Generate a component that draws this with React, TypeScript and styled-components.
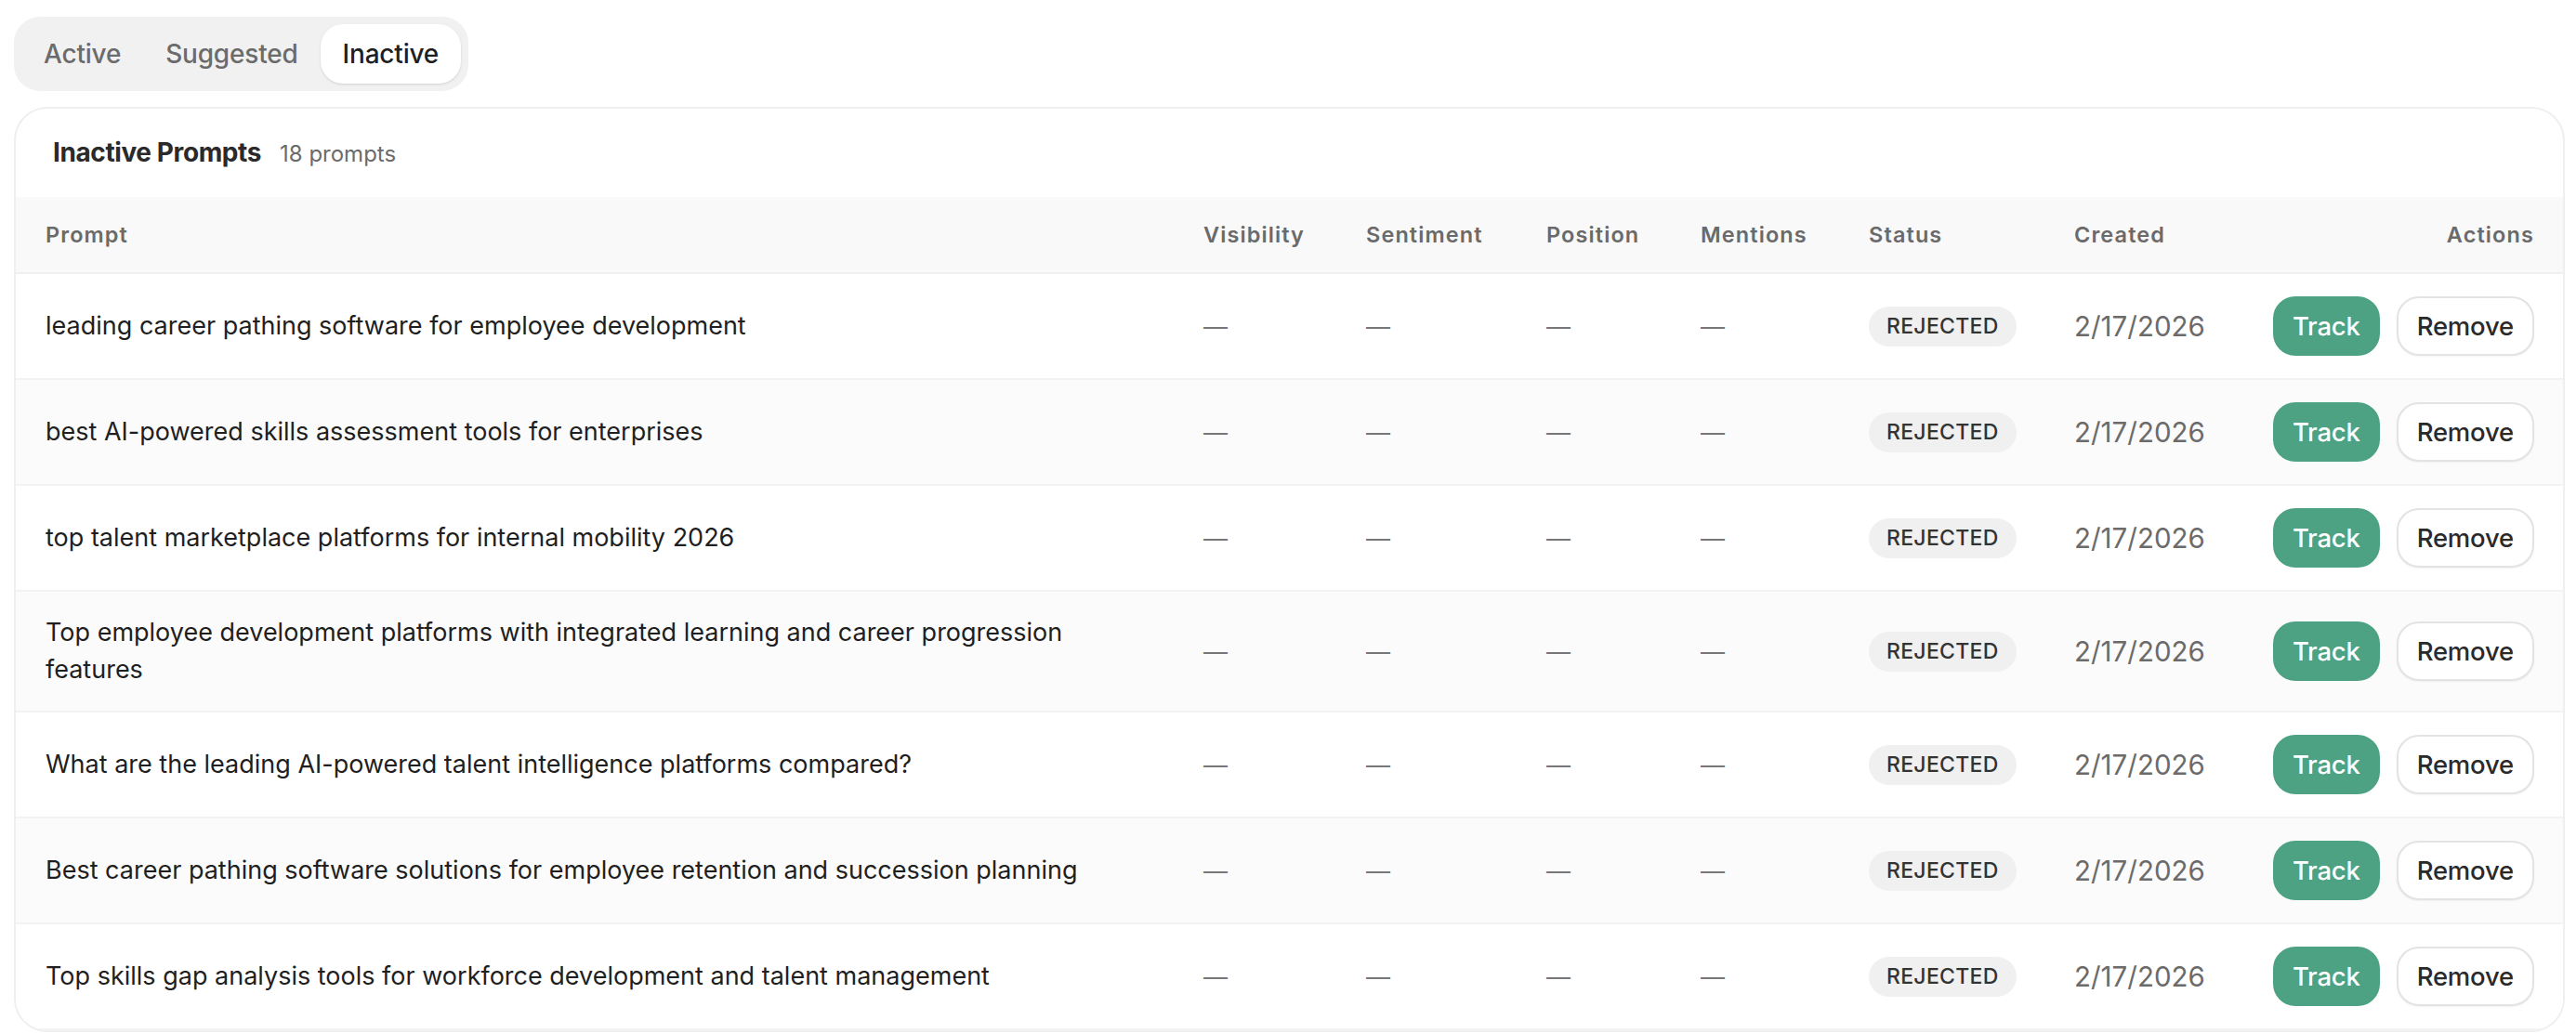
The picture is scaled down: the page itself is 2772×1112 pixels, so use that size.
import React from "react";
import styled, { createGlobalStyle } from "styled-components";

const GlobalStyle = createGlobalStyle`
  html, body {
    margin: 0;
    padding: 0;
    background: #ffffff;
  }
  body {
    font-family: Inter, "Liberation Sans", sans-serif;
    color: #222222;
    -webkit-font-smoothing: antialiased;
  }
  * { box-sizing: border-box; }
`;

const Shell = styled.div`
  height: 100vh;
  overflow: hidden;
  padding: 18px 12px 0 15px;
`;

const TabList = styled.div`
  display: inline-flex;
  align-items: center;
  padding: 8px;
  background: #f1f1f1;
  border-radius: 28px;
`;

const Tab = styled.button<{ $active?: boolean }>`
  height: 64px;
  padding: 0 24px;
  border: none;
  border-radius: 24px;
  font-family: Inter, "Liberation Sans", sans-serif;
  font-size: 28px;
  font-weight: 500;
  letter-spacing: -0.2px;
  cursor: pointer;
  color: ${(p) => (p.$active ? "#1f1f1f" : "#6b6b6b")};
  background: ${(p) => (p.$active ? "#ffffff" : "transparent")};
  box-shadow: ${(p) =>
    p.$active ? "0 1px 3px rgba(0,0,0,0.10), 0 1px 2px rgba(0,0,0,0.04)" : "none"};
`;

const Card = styled.section`
  margin-top: 17px;
  border: 2px solid #efefef;
  border-radius: 36px;
  background: #ffffff;
  overflow: hidden;
`;

const CardHeader = styled.header`
  height: 95px;
  display: flex;
  align-items: baseline;
  gap: 20px;
  padding: 0 40px;
  line-height: 95px;
`;

const Title = styled.h2`
  margin: 0;
  font-size: 28px;
  font-weight: 700;
  color: #2a2a2a;
  letter-spacing: -0.4px;
`;

const Count = styled.span`
  font-size: 24px;
  color: #6b6b6b;
`;

const Table = styled.table`
  width: 100%;
  border-collapse: collapse;
  table-layout: fixed;
`;

const HeadRow = styled.tr`
  background: #f9f9f9;
  border-bottom: 2px solid #f0f0f0;
`;

const Th = styled.th<{ $right?: boolean }>`
  height: 82px;
  padding: 0 32px;
  text-align: ${(p) => (p.$right ? "right" : "left")};
  font-size: 23.5px;
  font-weight: 600;
  letter-spacing: 1.1px;
  color: #6a6a6a;
  white-space: nowrap;
`;

const Row = styled.tr<{ $striped?: boolean }>`
  background: ${(p) => (p.$striped ? "#fbfbfb" : "#ffffff")};
  border-bottom: 2px solid #f3f3f3;
`;

const Td = styled.td<{ $right?: boolean; $wide?: boolean }>`
  padding: 24px ${(p) => (p.$wide ? "60px" : "32px")} 24px 32px;
  vertical-align: middle;
  text-align: ${(p) => (p.$right ? "right" : "left")};
`;

const PromptText = styled.span`
  font-size: 27px;
  line-height: 40px;
  color: #1f1f1f;
`;

const Dash = styled.span`
  font-size: 26px;
  color: #777777;
`;

const Badge = styled.span`
  display: inline-flex;
  align-items: center;
  height: 43px;
  padding: 0 19px;
  border-radius: 22px;
  background: #f0f0f0;
  font-size: 23px;
  font-weight: 500;
  letter-spacing: 0.3px;
  color: #333333;
`;

const DateText = styled.span`
  font-size: 29.5px;
  color: #6b6b6b;
  white-space: nowrap;
`;

const Actions = styled.div`
  display: flex;
  justify-content: flex-end;
  gap: 18px;
`;

const ActionButton = styled.button<{ $primary?: boolean }>`
  height: 64px;
  padding: 0 ${(p) => (p.$primary ? "19px" : "20px")};
  border-radius: 24px;
  font-family: Inter, "Liberation Sans", sans-serif;
  font-size: 27.5px;
  font-weight: 500;
  letter-spacing: -0.2px;
  cursor: pointer;
  color: ${(p) => (p.$primary ? "#ffffff" : "#2a2a2a")};
  background: ${(p) => (p.$primary ? "#4ca283" : "#ffffff")};
  border: 2px solid ${(p) => (p.$primary ? "#4ca283" : "#e3e3e3")};
  box-shadow: ${(p) => (p.$primary ? "none" : "0 1px 2px rgba(0,0,0,0.05)")};
`;

const prompts = [
  "leading career pathing software for employee development",
  "best AI-powered skills assessment tools for enterprises",
  "top talent marketplace platforms for internal mobility 2026",
  "Top employee development platforms with integrated learning and career progression features",
  "What are the leading AI-powered talent intelligence platforms compared?",
  "Best career pathing software solutions for employee retention and succession planning",
  "Top skills gap analysis tools for workforce development and talent management",
];

const columns = [
  { label: "Prompt", width: 1246 },
  { label: "Visibility", width: 175 },
  { label: "Sentiment", width: 194 },
  { label: "Position", width: 166 },
  { label: "Mentions", width: 181 },
  { label: "Status", width: 221 },
  { label: "Created", width: 218 },
  { label: "Actions", width: 341 },
];

export default function App() {
  return (
    <>
      <GlobalStyle />
      <Shell>
        <TabList>
          <Tab>Active</Tab>
          <Tab>Suggested</Tab>
          <Tab $active>Inactive</Tab>
        </TabList>
        <Card>
          <CardHeader>
            <Title>Inactive Prompts</Title>
            <Count>18 prompts</Count>
          </CardHeader>
          <Table>
            <colgroup>
              {columns.map((c) => (
                <col key={c.label} style={{ width: c.width }} />
              ))}
            </colgroup>
            <thead>
              <HeadRow>
                {columns.map((c) => (
                  <Th key={c.label} $right={c.label === "Actions"}>
                    {c.label}
                  </Th>
                ))}
              </HeadRow>
            </thead>
            <tbody>
              {prompts.map((p, i) => (
                <Row key={p} $striped={i % 2 === 1}>
                  <Td $wide>
                    <PromptText>{p}</PromptText>
                  </Td>
                  <Td><Dash>—</Dash></Td>
                  <Td><Dash>—</Dash></Td>
                  <Td><Dash>—</Dash></Td>
                  <Td><Dash>—</Dash></Td>
                  <Td>
                    <Badge>REJECTED</Badge>
                  </Td>
                  <Td>
                    <DateText>2/17/2026</DateText>
                  </Td>
                  <Td $right>
                    <Actions>
                      <ActionButton $primary>Track</ActionButton>
                      <ActionButton>Remove</ActionButton>
                    </Actions>
                  </Td>
                </Row>
              ))}
            </tbody>
          </Table>
        </Card>
      </Shell>
    </>
  );
}
